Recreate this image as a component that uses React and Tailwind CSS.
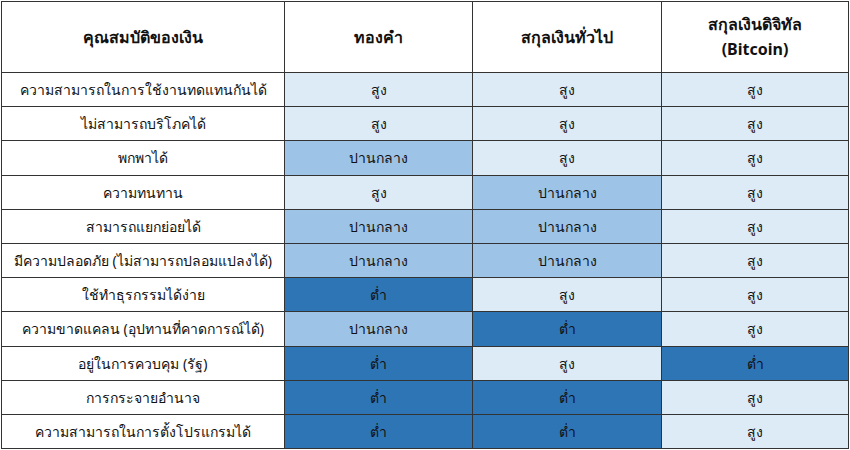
const HEAD = ['คุณสมบัติของเงิน', 'ทองคำ', 'สกุลเงินทั่วไป', 'สกุลเงินดิจิทัล\n(Bitcoin)'];

const ROWS = [
  ['ความสามารถในการใช้งานทดแทนกันได้', 'สูง', 'สูง', 'สูง'],
  ['ไม่สามารถบริโภคได้', 'สูง', 'สูง', 'สูง'],
  ['พกพาได้', 'ปานกลาง', 'สูง', 'สูง'],
  ['ความทนทาน', 'สูง', 'ปานกลาง', 'สูง'],
  ['สามารถแยกย่อยได้', 'ปานกลาง', 'ปานกลาง', 'สูง'],
  ['มีความปลอดภัย (ไม่สามารถปลอมแปลงได้)', 'ปานกลาง', 'ปานกลาง', 'สูง'],
  ['ใช้ทำธุรกรรมได้ง่าย', 'ต่ำ', 'สูง', 'สูง'],
  ['ความขาดแคลน (อุปทานที่คาดการณ์ได้)', 'ปานกลาง', 'ต่ำ', 'สูง'],
  ['อยู่ในการควบคุม (รัฐ)', 'ต่ำ', 'สูง', 'ต่ำ'],
  ['การกระจายอำนาจ', 'ต่ำ', 'ต่ำ', 'สูง'],
  ['ความสามารถในการตั้งโปรแกรมได้', 'ต่ำ', 'ต่ำ', 'สูง'],
];

const SHADE = {
  'สูง': 'bg-[#ddebf7]',
  'ปานกลาง': 'bg-[#9dc3e6]',
  'ต่ำ': 'bg-[#2e75b6]',
};

const WIDTHS = ['w-[283px]', 'w-[188px]', 'w-[189px]', 'w-[187px]'];

export default function App() {
  return (
    <div className="w-[850px] h-[450px] bg-white p-px font-['Tahoma','Noto_Sans','DejaVu_Sans',sans-serif] text-[#111]">
      <table className="border-collapse table-fixed w-[848px] border border-[#444]">
        <thead>
          <tr className="h-[71px]">
            {HEAD.map((h, i) => (
              <th key={i} className={`${WIDTHS[i]} border border-[#333] text-[16px] font-bold leading-[25px] whitespace-pre-line text-center`}>
                {h}
              </th>
            ))}
          </tr>
        </thead>
        <tbody>
          {ROWS.map((r, ri) => (
            <tr key={ri} className="h-[34.2px]">
              <td className="border border-[#333] text-center text-[14px] p-0">{r[0]}</td>
              {r.slice(1).map((v, ci) => (
                <td key={ci} className={`${SHADE[v]} border border-[#333] text-center text-[14px] p-0`}>{v}</td>
              ))}
            </tr>
          ))}
        </tbody>
      </table>
    </div>
  );
}
